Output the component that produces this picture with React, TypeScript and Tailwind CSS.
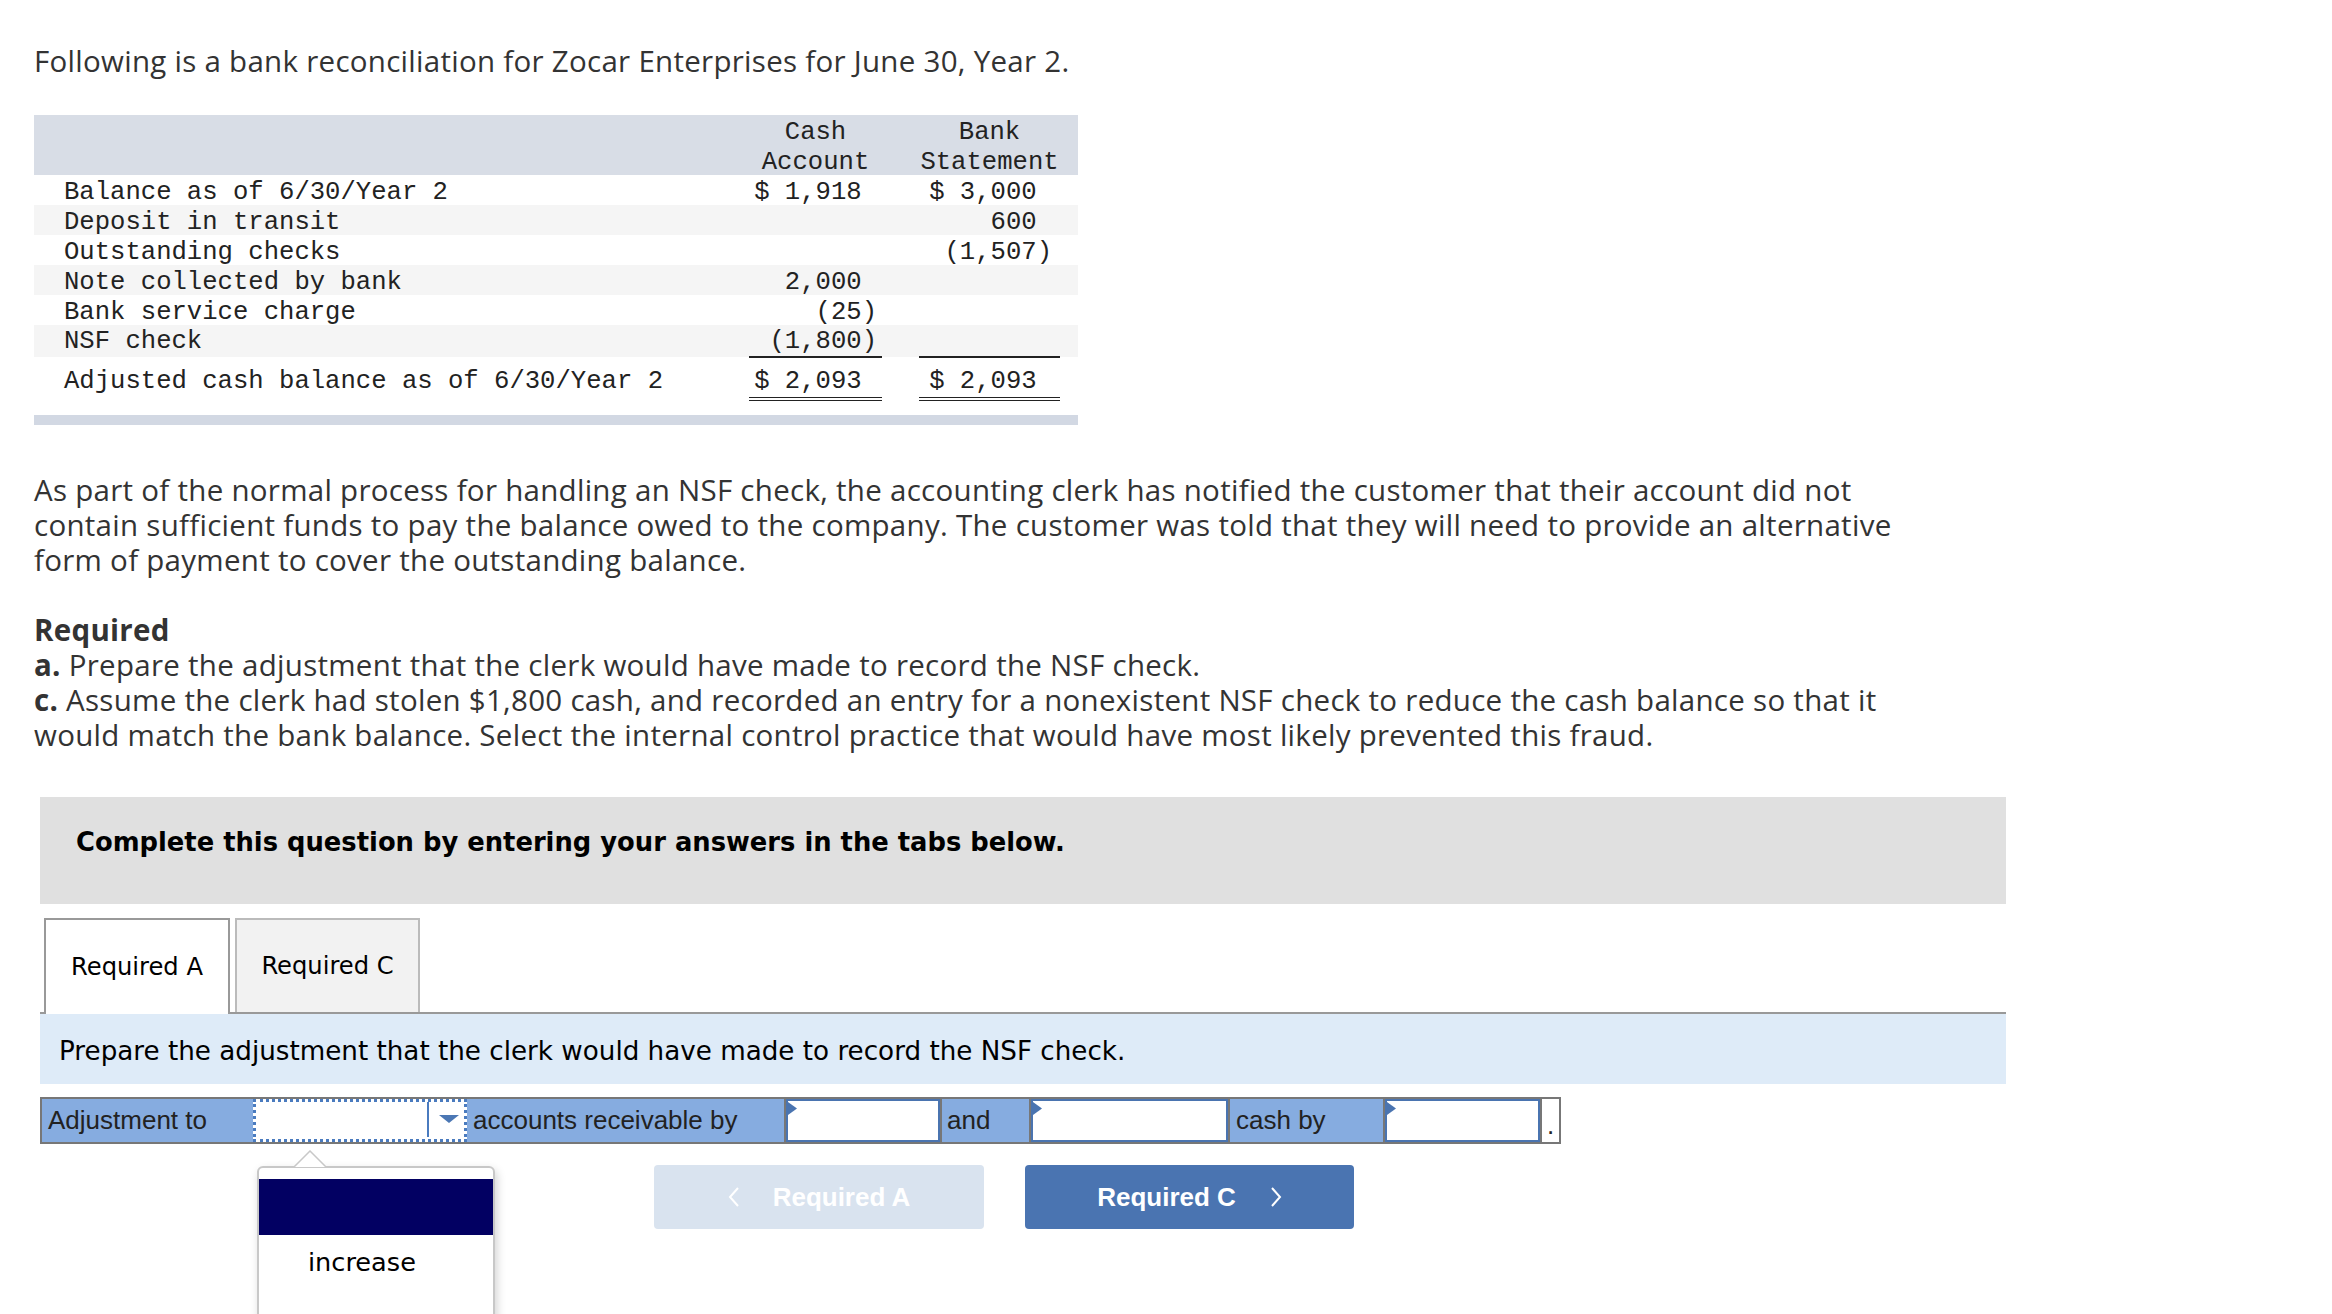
import React from "react";

const PROX = "font-['Open_Sans','Lato',sans-serif]";
const VERD = "font-['DejaVu_Sans','Verdana',sans-serif]";
const ARIAL = "font-['Liberation_Sans','Arial',sans-serif]";
const MONO = "font-['Liberation_Mono','Courier_New',monospace]";

function Flag() {
  return (
    <svg className="absolute left-0 top-[1px]" width="10" height="14" viewBox="0 0 10 14">
      <polygon points="0,0 9,6.5 0,13" fill="#4a74b0" />
    </svg>
  );
}

function InputCell({ w }: { w: string }) {
  return (
    <div className={`${w} h-full border-x-2 border-[#777] bg-white`}>
      <div className="relative h-full w-full border-2 border-[#4a74b0] bg-white">
        <Flag />
      </div>
    </div>
  );
}

function Chevron({ dir }: { dir: "left" | "right" }) {
  return (
    <svg width="12" height="20" viewBox="0 0 12 20" className="shrink-0">
      {dir === "left" ? (
        <polyline points="10,1 2,10 10,19" fill="none" stroke="#fff" strokeWidth="2" />
      ) : (
        <polyline points="2,1 10,10 2,19" fill="none" stroke="#fff" strokeWidth="2" />
      )}
    </svg>
  );
}

function Line({ children }: { children: React.ReactNode }) {
  return <div className="h-[35px] leading-[35px]">{children}</div>;
}

export default function App() {
  const rows: { label: string; cash: string; bank: string; stripe: boolean }[] = [
    { label: "Balance as of 6/30/Year 2", cash: "$ 1,918 ", bank: "$ 3,000 ", stripe: false },
    { label: "Deposit in transit", cash: "", bank: "600 ", stripe: true },
    { label: "Outstanding checks", cash: "", bank: "(1,507)", stripe: false },
    { label: "Note collected by bank", cash: "2,000 ", bank: "", stripe: true },
    { label: "Bank service charge", cash: "(25)", bank: "", stripe: false },
  ];

  return (
    <div className="relative w-[2332px] h-[1314px] overflow-hidden bg-white">
      {/* Title */}
      <div className={`${PROX} pl-[34px] pt-[43px] text-[29.5px] tracking-[0.28px] text-[#333] whitespace-nowrap`}>
        <Line>Following is a bank reconciliation for Zocar Enterprises for June 30, Year 2.</Line>
      </div>

      {/* Reconciliation table */}
      <div className={`${MONO} ml-[34px] mt-[37px] w-[1044px] text-[25.6px] text-[#222]`}>
        <div className="grid h-[60px] grid-cols-[715px_133px_37px_141px_18px] bg-[#d8dde6] leading-[30px]">
          <div />
          <div className="pt-[3px] text-center whitespace-nowrap">
            Cash
            <br />
            Account
          </div>
          <div />
          <div className="pt-[3px] text-center whitespace-nowrap">
            Bank
            <br />
            Statement
          </div>
          <div />
        </div>
        {rows.map((r) => (
          <div
            key={r.label}
            className={`grid h-[30px] grid-cols-[715px_133px_37px_141px_18px] leading-[30px] ${
              r.stripe ? "bg-[#f5f5f5]" : "bg-white"
            }`}
          >
            <div className="pl-[30px] pt-[3px] whitespace-pre">{r.label}</div>
            <div className="pr-[5px] pt-[3px] text-right whitespace-pre">{r.cash}</div>
            <div />
            <div className="pr-[8px] pt-[3px] text-right whitespace-pre">{r.bank}</div>
            <div />
          </div>
        ))}
        <div className="grid h-[32px] grid-cols-[715px_133px_37px_141px_18px] bg-[#f5f5f5] leading-[28px]">
          <div className="pl-[30px] pt-[3px] whitespace-pre">NSF check</div>
          <div className="border-b-2 border-[#222] pr-[5px] pt-[3px] text-right whitespace-pre">(1,800)</div>
          <div />
          <div className="border-b-2 border-[#222]" />
          <div />
        </div>
        <div className="grid grid-cols-[715px_133px_37px_141px_18px] leading-[30px]">
          <div className="pl-[30px] pt-[10px] whitespace-pre">Adjusted cash balance as of 6/30/Year 2</div>
          <div className="border-b-4 border-double border-[#222] pt-[10px] pr-[5px] text-right whitespace-pre">
            {"$ 2,093 "}
          </div>
          <div />
          <div className="border-b-4 border-double border-[#222] pt-[10px] pr-[8px] text-right whitespace-pre">
            {"$ 2,093 "}
          </div>
          <div />
        </div>
        <div className="mt-[14px] h-[10px] bg-[#d2d8e3]" />
      </div>

      {/* Narrative */}
      <div className={`${PROX} mt-[47px] pl-[34px] text-[29.5px] tracking-[0.28px] text-[#333] whitespace-nowrap`}>
        <div>
          <Line>
            As part of the normal process for handling an NSF check, the accounting clerk has notified the customer that their account did not
          </Line>
          <Line>
            contain sufficient funds to pay the balance owed to the company. The customer was told that they will need to provide an alternative
          </Line>
          <Line>form of payment to cover the outstanding balance.</Line>
        </div>
        <div className="mt-[35px]">
          <Line>
            <span className="font-bold">Required</span>
          </Line>
          <Line>
            <span className="font-bold">a.</span> Prepare the adjustment that the clerk would have made to record the NSF check.
          </Line>
          <Line>
            <span className="font-bold">c.</span> Assume the clerk had stolen $1,800 cash, and recorded an entry for a nonexistent NSF check to reduce the cash balance so that it
          </Line>
          <Line>
            would match the bank balance. Select the internal control practice that would have most likely prevented this fraud.
          </Line>
        </div>
      </div>

      {/* Instruction box */}
      <div className="ml-[40px] mt-[45px] w-[1966px]">
        <div className={`${VERD} h-[107px] bg-[#e0e0e0] pl-[36px] pt-[30px] text-[25.8px] font-bold leading-[30px] text-black whitespace-nowrap`}>
          Complete this question by entering your answers in the tabs below.
        </div>

        {/* Tabs */}
        <div className={`${VERD} mt-[14px] flex h-[96px] items-end border-b-2 border-[#999] text-[24.2px] text-black`}>
          <div className="relative -mb-[2px] ml-[4px] flex h-[96px] w-[186px] items-center justify-center border-2 border-b-0 border-[#999] bg-white">
            Required A
          </div>
          <div className="ml-[5px] flex h-[94px] w-[185px] items-center justify-center border-2 border-b-0 border-[#bbb] bg-[#f2f2f2]">
            Required C
          </div>
        </div>

        {/* Prompt bar */}
        <div className={`${VERD} flex h-[70px] items-center bg-[#deebf8] pl-[19px] pt-[6px] text-[26.2px] text-black whitespace-nowrap`}>
          Prepare the adjustment that the clerk would have made to record the NSF check.
        </div>

        {/* Input row */}
        <div className={`${ARIAL} mt-[13px] flex h-[47px] w-[1521px] border-2 border-[#777] text-[26px] text-[#222]`}>
          <div className="flex w-[211px] items-center bg-[#86ace0] pl-[6px] whitespace-nowrap">Adjustment to</div>
          <div className="relative w-[214px] border-[3px] border-dotted border-[#4a7bbf] bg-white">
            <div className="absolute left-[171px] top-0 bottom-[2px] w-[2px] bg-[#4a7bbf]" />
            <svg className="absolute left-[183px] top-[13px]" width="20" height="9" viewBox="0 0 20 9">
              <polygon points="0,0 20,0 10,8" fill="#4b77b4" />
            </svg>
          </div>
          <div className="flex w-[317px] items-center bg-[#86ace0] pl-[6px] whitespace-nowrap">accounts receivable by</div>
          <InputCell w="w-[158px]" />
          <div className="flex w-[87px] items-center bg-[#86ace0] pl-[5px]">and</div>
          <InputCell w="w-[201px]" />
          <div className="flex w-[153px] items-center bg-[#86ace0] pl-[6px] whitespace-nowrap">cash by</div>
          <InputCell w="w-[159px]" />
          <div className="flex w-[17px] items-end justify-center bg-white pb-[4px] leading-none">.</div>
        </div>
      </div>

      {/* Nav buttons */}
      <div className={`${ARIAL} ml-[654px] mt-[21px] flex gap-[41px] text-[26px] font-bold text-white`}>
        <div className="flex h-[64px] w-[330px] items-center justify-center gap-[33px] rounded-[4px] bg-[#d9e3ef]">
          <Chevron dir="left" />
          <span>Required A</span>
        </div>
        <div className="flex h-[64px] w-[329px] items-center justify-center gap-[34px] rounded-[4px] bg-[#4a74b1]">
          <span>Required C</span>
          <Chevron dir="right" />
        </div>
      </div>

      {/* Dropdown popup */}
      <div className="absolute left-[257px] top-[1150px] w-[238px]">
        <svg className="absolute left-[36px] top-0 z-10" width="34" height="18" viewBox="0 0 34 18">
          <polygon points="1,17 17,1 33,17" fill="#fff" />
          <polyline points="1,17 17,1 33,17" fill="none" stroke="#c8c8c8" strokeWidth="1.5" />
        </svg>
        <div
          className={`${VERD} mt-[16px] h-[200px] rounded-t-[6px] border-2 border-[#c8c8c8] bg-white pt-[11px] text-[25.6px] text-black shadow-[2px_4px_10px_rgba(0,0,0,0.18)]`}
        >
          <div className="h-[56px] bg-[#020062]" />
          <div className="flex h-[55px] items-center pl-[49px]">increase</div>
        </div>
      </div>
    </div>
  );
}
